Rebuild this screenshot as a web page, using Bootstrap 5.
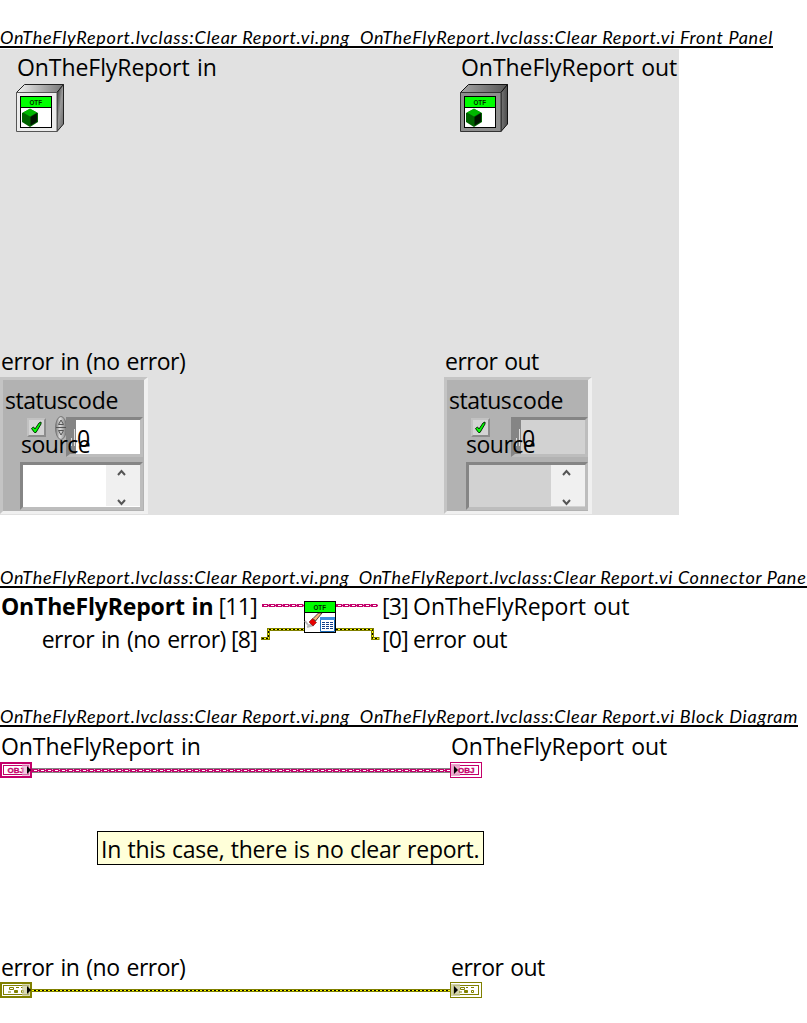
<!DOCTYPE html>
<html lang="en">
<head>
<meta charset="utf-8">
<meta name="viewport" content="width=device-width, initial-scale=1">
<title>Clear Report.vi</title>
<link href="https://cdn.jsdelivr.net/npm/bootstrap@5.3.0/dist/css/bootstrap.min.css" rel="stylesheet">
<style>
body{font-family:"Open Sans","Noto Sans",sans-serif;font-size:23px;line-height:32px;color:#000;background:#fff;overflow:hidden}
svg{display:block;flex:none}
svg text{user-select:none}
.doc-title{font:italic 18px/20px Lato,sans-serif;height:21px;white-space:pre;overflow:hidden;border-bottom:2px solid #000;width:max-content;letter-spacing:.753px;margin:0}
.title-front{margin-top:27px}
.title-conn{margin-top:52px;letter-spacing:.745px;word-spacing:-.3px}
.title-diag{margin-top:53px;letter-spacing:.75px}
.lbl{white-space:nowrap;height:32px}
.ls-in{letter-spacing:-.07px;word-spacing:1.5px}.ls-out{letter-spacing:-.05px;word-spacing:1.5px}.ls-err{letter-spacing:-.5px;word-spacing:1.5px}.ls-eo{letter-spacing:-.5px;word-spacing:1.2px}
.ls-key{letter-spacing:-.16px;word-spacing:1px}.ls-num{letter-spacing:-.7px}
/* front panel */
.front{width:679px;height:466px;background:#e1e1e1;margin-top:1px}
.side{width:444px}
.obj-in{padding:2px 0 0 16px}
.obj-in .lbl{padding-left:1px}
.err-lbl{margin-top:213px;padding-left:1px}
.cluster{width:148px;height:137px;background:#b2b2b2;border:3px solid;border-color:#c4c4c4 #f0f0f0 #f0f0f0 #c4c4c4;border-right-width:4px}
.cluster>*{position:absolute}
.t-status{left:2px;top:4px;letter-spacing:-.5px}
.t-code{left:64px;top:3px;letter-spacing:-.1px}
.t-source{left:18px;top:47px;letter-spacing:-.5px}
.t-zero{left:74px;top:41px}
.led{left:24px;top:38px;width:19px;height:19px;background:#d4d4d4;border:2px solid;border-color:#c2c2c2 #8c8c8c #8c8c8c #c2c2c2}
.spin{left:52px;top:36px}
.well{border:3px solid;border-color:#858585 #bdbdbd #bdbdbd #858585;background:#fff}
.num{left:63px;top:37px;width:77px;height:40px;border-left-width:4px}
.radix{width:6px;height:100%;background:#858585}
.str{left:17px;top:82px;width:123px;height:48px}
.scroller{width:34px;background:#f0f0f0;margin-bottom:1px}
.indicator .well{background:#d2d2d2}
.indicator .t-code{left:65px}
.indicator .t-source{left:19px}
.indicator .str{left:19px;width:122px}
.indicator .num{left:64px}
.indicator .t-zero{left:75px}
/* connector pane */
.conn{height:65px;padding-top:2px}
.conn-l{width:257px}
.conn-l .lbl,.conn-r .lbl{gap:5px}
.lbl+.lbl{margin-top:1px}
/* block diagram */
.term-row{height:16px}
.diag-l{width:450px}
.diag-top{margin-top:3px}
.diag-top .lbl{padding-left:1px}
.diag-bottom{margin-top:86px;height:31px}
.diag-bottom .lbl{padding-left:1px;margin:0}
.diag-top .lbl{margin:0}
.note{width:387px;height:34px;line-height:35px;background:#ffffd9;border:1px solid #000;padding-left:3px;margin:53px 0 0 97px;letter-spacing:-.23px;word-spacing:.6px;white-space:nowrap}
</style>
</head>
<body>
<svg width="0" height="0" class="position-absolute">
<defs>
<linearGradient id="gTopL" x1="0" x2="1"><stop offset="0" stop-color="#f4f4f4"/><stop offset="1" stop-color="#757575"/></linearGradient>
<linearGradient id="gSideL" x1="0" x2="1" y1="0" y2="1"><stop offset="0" stop-color="#333"/><stop offset=".5" stop-color="#999"/><stop offset="1" stop-color="#666"/></linearGradient>
<linearGradient id="gTopD" x1="0" x2="1"><stop offset="0" stop-color="#a5a5a5"/><stop offset="1" stop-color="#555"/></linearGradient>
<linearGradient id="gSideD" x1="0" x2="1"><stop offset="0" stop-color="#777"/><stop offset="1" stop-color="#4a4a4a"/></linearGradient>
<linearGradient id="gSpin" x1="0" x2="1"><stop offset="0" stop-color="#777"/><stop offset=".4" stop-color="#ddd"/><stop offset="1" stop-color="#777"/></linearGradient>
<pattern id="pinkChain" width="7" height="3" patternUnits="userSpaceOnUse"><rect width="7" height="3" fill="#c4006a"/><rect x="2" y="1" width="3" height="1" fill="#fff"/><path d="M6 0h1v1H6zM6 2h1v1H6z" fill="#e9a3c9"/></pattern>
<pattern id="errDash" width="4" height="3" patternUnits="userSpaceOnUse"><rect width="4" height="3" fill="#808000"/><rect y="1" width="2" height="1" fill="#ff0"/><rect x="2" y="1" width="2" height="1" fill="#000"/></pattern>
<g id="otf"><rect x=".5" y=".5" width="31" height="31" fill="#fff" stroke="#000"/><rect x="1" y="1" width="30" height="10" fill="#0f0"/><rect y="11" width="32" height="1"/><text x="9.500" y="9" font-family="Liberation Sans,sans-serif" font-weight="700" font-size="7" textLength="12.500" lengthAdjust="spacingAndGlyphs" fill="#002800">OTF</text></g>
<g id="cube"><path d="M10 13l8 4v9l-8 5-8-5v-9z" fill="#006400"/><path d="M10 12.500l7 4-7 4-7-4z" fill="#00b800"/><path d="M10.500 21l6.500-4v8.500l-6.500 4z" fill="#001400"/></g>
<path id="tick" d="M2.500 8.500l2-1.500 1.500 2 4-6 2-1v2L7 12.500H5.500z" fill="#0f0" stroke="#003000" stroke-width="1"/>
<g id="arrows" fill="none" stroke="#555" stroke-width="2"><path d="M12 11l3.500-4 3.500 4"/><path d="M12 36l3.500 4 3.500-4"/></g>
<g id="radixMark" fill="#ddd"><path d="M4 13h1v17H4zM1 22h1v8H1z"/></g>
</defs>
</svg>

<main>
<section>
<h1 class="doc-title title-front">OnTheFlyReport.lvclass:Clear Report.vi.png  OnTheFlyReport.lvclass:Clear Report.vi Front Panel</h1>
<div class="front d-flex">
  <div class="side flex-shrink-0">
    <div class="obj-in">
      <div class="lbl ls-in">OnTheFlyReport in</div>
      <svg width="48" height="49" viewBox="0 -2 48 49"><path d="M.500 7.500L8.500-.500H47.500L41 7.500z" fill="url(#gTopL)" stroke="#222"/><path d="M41 7.500L47.500-.500V39L41 46.500z" fill="url(#gSideL)" stroke="#222"/><path d="M.500 7.500H41V46.500H.500z" fill="#ececec" stroke="#555"/><g transform="translate(4 11)"><use href="#otf"/><use href="#cube"/></g></svg>
    </div>
    <div class="err-lbl"><div class="lbl ls-err">error in (no error)</div></div>
    <div class="cluster position-relative">
      <div class="led"><svg width="15" height="15" viewBox="0 0 15 15"><use href="#tick"/></svg></div>
      <svg class="spin" width="12" height="24" viewBox="0 0 12 24"><ellipse cx="6" cy="12" rx="5.500" ry="11.500" fill="url(#gSpin)" stroke="#777"/><path d="M1 11.500h10M3.500 8.500L6 4l2.500 4.500zM3.500 14.500L6 19l2.500-4.500z" fill="#ccc" stroke="#555"/></svg>
      <div class="well num"><div class="radix"><svg width="6" height="34"><use href="#radixMark" y="-4"/></svg></div></div>
      <div class="well str d-flex justify-content-end"><div class="scroller"><svg width="34" height="41" viewBox="0 1 34 41"><use href="#arrows"/></svg></div></div>
      <div class="lbl t-status">status</div><div class="lbl t-code">code</div><div class="lbl t-zero">0</div><div class="lbl t-source">source</div>
    </div>
  </div>
  <div class="flex-shrink-0">
    <div class="obj-in">
      <div class="lbl ls-out">OnTheFlyReport out</div>
      <svg width="48" height="49" viewBox="0 -2 48 49"><path d="M.500 7.500L8.500-.500H47.500L41 7.500z" fill="url(#gTopD)" stroke="#111"/><path d="M41 7.500L47.500-.500V39L41 46.500z" fill="url(#gSideD)" stroke="#111"/><path d="M.500 7.500H41V46.500H.500z" fill="#8e8e8e" stroke="#333"/><g transform="translate(4 11)"><use href="#otf"/><use href="#cube"/></g></svg>
    </div>
    <div class="err-lbl"><div class="lbl ls-eo">error out</div></div>
    <div class="cluster indicator position-relative">
      <div class="led"><svg width="15" height="15" viewBox="0 0 15 15"><use href="#tick"/></svg></div>
      <div class="well num"><div class="radix"><svg width="6" height="34"><use href="#radixMark" y="-4"/></svg></div></div>
      <div class="well str d-flex justify-content-end"><div class="scroller"><svg width="34" height="41" viewBox="0 1 34 41"><use href="#arrows"/></svg></div></div>
      <div class="lbl t-status">status</div><div class="lbl t-code">code</div><div class="lbl t-zero">0</div><div class="lbl t-source">source</div>
    </div>
  </div>
</div>
</section>

<section>
<h2 class="doc-title title-conn">OnTheFlyReport.lvclass:Clear Report.vi.png  OnTheFlyReport.lvclass:Clear Report.vi Connector Pane</h2>
<div class="conn d-flex">
  <div class="conn-l">
    <div class="lbl d-flex justify-content-end"><b class="ls-key">OnTheFlyReport in</b><span class="ls-num">[11]</span></div>
    <div class="lbl d-flex justify-content-end"><span class="ls-err">error in (no error)</span><span class="ls-num">[8]</span></div>
  </div>
  <svg width="125" height="63" viewBox="257 590 125 63">
    <g transform="translate(262 604)"><rect width="42" height="3" fill="url(#pinkChain)"/></g>
    <g transform="translate(336 604)"><rect width="42" height="3" fill="url(#pinkChain)"/></g>
    <g fill="none" stroke="#808000" stroke-width="3"><path d="M261 638.500h7.500v-9H304M336 629.500h36.500v9h7"/></g>
    <g fill="none" stroke="#ff0" stroke-width="1"><path d="M262 638.500h6.500v-9H304M336 629.500h36.500v9h6"/></g>
    <g fill="none" stroke="#000" stroke-width="1" stroke-dasharray="2 2"><path d="M262 638.500h6.500v-9H304M336 629.500h36.500v9h6"/></g>
    <g transform="translate(304 601)"><use href="#otf"/><path d="M1 20l4 5 7-7M3 26l7-2" fill="none" stroke="#bbb" stroke-width="2"/><path d="M9 17.500L14.500 12h3.500l-6.500 8z" fill="#f9b377" stroke="#222" stroke-width=".8"/><path d="M8.500 17.500l4 4-3.500 3.500-4-4z" fill="#e60000" stroke="#711" stroke-width=".6"/>
      <path d="M16.500 16.500h14v14h-14z" fill="#fff" stroke="#1767b5"/><path d="M16 16h15v3H16z" fill="#3d8ddb"/><path d="M18 21.500h11M18 23.500h11M18 25.500h11M18 27.500h11" stroke="#123f8a" stroke-width="1" stroke-dasharray="3 1"/></g>
  </svg>
  <div class="conn-r">
    <div class="lbl d-flex"><span class="ls-num">[3]</span><span class="ls-out">OnTheFlyReport out</span></div>
    <div class="lbl d-flex"><span class="ls-num">[0]</span><span class="ls-eo">error out</span></div>
  </div>
</div>
</section>

<section>
<h2 class="doc-title title-diag">OnTheFlyReport.lvclass:Clear Report.vi.png  OnTheFlyReport.lvclass:Clear Report.vi Block Diagram</h2>
<div class="d-flex diag-top"><div class="lbl diag-l ls-in">OnTheFlyReport in</div><div class="lbl ls-out">OnTheFlyReport out</div></div>
<div class="term-row d-flex align-items-center">
  <svg width="32" height="16"><rect width="32" height="16" fill="#c4006a"/><rect x="2" y="2" width="28" height="12" fill="#fff"/><rect x="3.500" y="3.500" width="25" height="9" fill="#fff" stroke="#c4006a"/><text x="7.500" y="10.700" font-family="Liberation Sans,sans-serif" font-weight="700" font-size="8" fill="#c4006a" stroke="#c4006a" stroke-width=".3" textLength="16.500" lengthAdjust="spacingAndGlyphs">OBJ</text><rect x="22" y="2" width="8" height="12" fill="#e9a3c9" opacity=".6"/><path d="M27 4l4 4-4 4z"/></svg>
  <svg width="418" height="5"><rect width="418" height="5" fill="#858585"/><g transform="translate(0 1)"><rect width="418" height="3" fill="url(#pinkChain)"/></g></svg>
  <svg width="32" height="16"><rect x=".5" y=".5" width="31" height="15" fill="#fff" stroke="#c4006a"/><rect x="3.500" y="3.500" width="25" height="9" fill="#fff" stroke="#c4006a"/><rect x="1" y="2" width="9" height="12" fill="#e9a3c9" opacity=".9"/><text x="8" y="10.700" font-family="Liberation Sans,sans-serif" font-weight="700" font-size="8" fill="#c4006a" stroke="#c4006a" stroke-width=".3" textLength="16.500" lengthAdjust="spacingAndGlyphs">OBJ</text><path d="M4 4l4 4-4 4z"/></svg>
</div>
<div class="note">In this case, there is no clear report.</div>
<div class="d-flex diag-bottom"><div class="lbl diag-l ls-err">error in (no error)</div><div class="lbl ls-eo">error out</div></div>
<div class="term-row d-flex align-items-center">
  <svg width="32" height="16"><rect width="32" height="16" fill="#808000"/><rect x="2" y="2" width="28" height="12" fill="#fff"/><rect x="3.500" y="3.500" width="25" height="9" fill="#fff" stroke="#808000"/><g fill="none" stroke="#808000"><path d="M9.500 5.500h4v2h-4zM16 5.500h3M8 10h3M21.500 8.500h2v2h-2zM21 5.500h2"/><path d="M14.500 8.500h3v2h-3z" fill="#808000"/></g><rect x="22" y="2" width="8" height="12" fill="#c8c89a" opacity=".7"/><path d="M27 4l4 4-4 4z"/></svg>
  <svg width="418" height="3"><rect width="418" height="3" fill="url(#errDash)"/></svg>
  <svg width="32" height="16"><rect x=".5" y=".5" width="31" height="15" fill="#fff" stroke="#808000"/><rect x="3.500" y="3.500" width="25" height="9" fill="#fff" stroke="#808000"/><rect x="1" y="2" width="9" height="12" fill="#c8c89a" opacity=".8"/><g fill="none" stroke="#808000"><path d="M10.500 5.500h4v2h-4zM16 5.500h2M9 10h3M21.500 8.500h2v2h-2zM21 5.500h3"/><path d="M14.500 8.500h3v2h-3z" fill="#808000"/></g><path d="M4 4l4 4-4 4z"/></svg>
</div>
</section>
</main>
<script src="https://cdn.jsdelivr.net/npm/bootstrap@5.3.0/dist/js/bootstrap.bundle.min.js"></script>
</body>
</html>
